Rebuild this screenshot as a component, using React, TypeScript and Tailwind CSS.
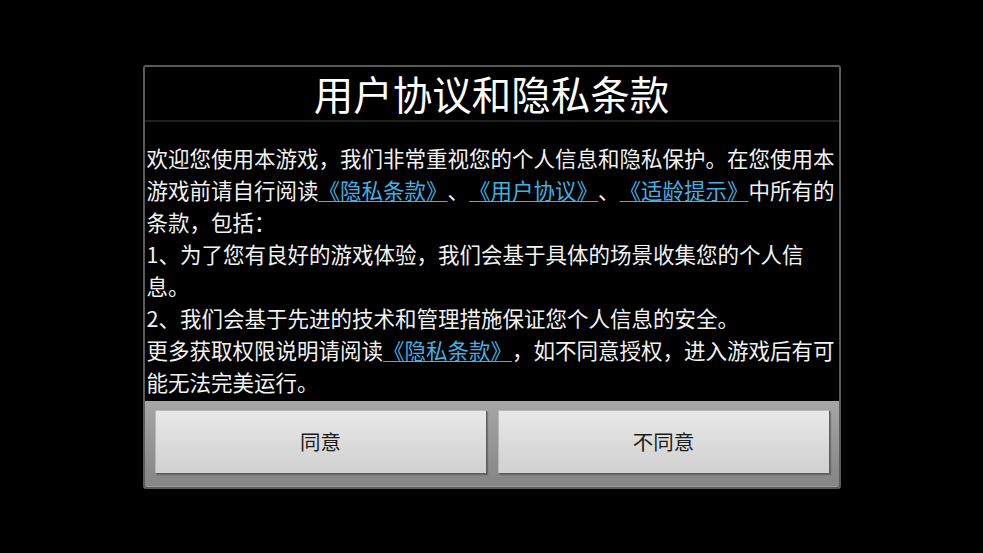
import React from 'react';

const Link: React.FC<{ children: React.ReactNode }> = ({ children }) => (
  <span className="text-[#3db2e4] underline decoration-1 underline-offset-2">{children}</span>
);

const App: React.FC = () => {
  return (
    <div className="w-full h-[553px] bg-black flex items-center justify-center font-['Noto_Sans_CJK_SC',sans-serif] [text-spacing-trim:space-all]">
      <div className="w-[698px] h-[424px] border-2 border-[#5a5a5a] rounded-[3px] bg-black flex flex-col overflow-hidden">
        {/* Title */}
        <div className="h-[55px] shrink-0 border-b-2 border-[#202020] flex items-center justify-center text-[39.5px] leading-none text-white">
          用户协议和隐私条款
        </div>

        {/* Body */}
        <div className="h-[279px] shrink-0 px-[2px] pt-[20px] text-[21.5px] leading-[32px] text-[#f2f2f2]">
          <p>
            欢迎您使用本游戏，我们非常重视您的个人信息和隐私保护。在您使用本游戏前请自行阅读
            <Link>《隐私条款》</Link>、<Link>《用户协议》</Link>、<Link>《适龄提示》</Link>
            中所有的条款，包括：
          </p>
          <p>1、为了您有良好的游戏体验，我们会基于具体的场景收集您的个人信息。</p>
          <p>2、我们会基于先进的技术和管理措施保证您个人信息的安全。</p>
          <p>
            更多获取权限说明请阅读<Link>《隐私条款》</Link>，如不同意授权，进入游戏后有可能无法完美运行。
          </p>
        </div>

        {/* Buttons */}
        <div className="flex-1 bg-gradient-to-b from-[#a6a6a6] to-[#858585] border-b border-[#9a9a9a] flex gap-[12px] px-[10px] pt-[9px]">
          <button
            type="button"
            className="flex-1 h-[63px] bg-gradient-to-b from-[#e8e8e8] to-[#d0d0d0] border-l border-t border-[#b8b8b8] shadow-[1px_1px_0_#5e5e5e,2px_2px_1px_rgba(0,0,0,0.25)] text-[20.5px] text-[#1c1c1c] flex items-center justify-center"
          >
            同意
          </button>
          <button
            type="button"
            className="flex-1 h-[63px] bg-gradient-to-b from-[#e8e8e8] to-[#d0d0d0] border-l border-t border-[#b8b8b8] shadow-[1px_1px_0_#5e5e5e,2px_2px_1px_rgba(0,0,0,0.25)] text-[20.5px] text-[#1c1c1c] flex items-center justify-center"
          >
            不同意
          </button>
        </div>
      </div>
    </div>
  );
};

export default App;
